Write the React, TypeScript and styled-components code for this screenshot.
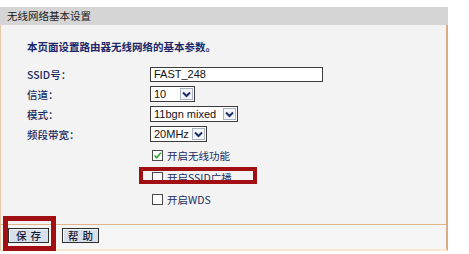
import React from "react";
import styled, { createGlobalStyle } from "styled-components";

const Global = createGlobalStyle`
  html, body { margin: 0; padding: 0; background: #ffffff; }
  body { font-family: "Noto Sans CJK SC", "Liberation Sans", sans-serif; }
`;

const Panel = styled.div`
  width: 448px;
  padding-top: 7px;
`;

const Header = styled.div`
  height: 18px;
  background: #d5d5d5;
  display: flex;
  align-items: center;
  padding-left: 7px;
  font-size: 10.5px;
  color: #1a1a1a;
  line-height: 18px;
`;

const Body = styled.div`
  background: #f3f3f3;
  border-left: 1px solid #e6c7a6;
  border-right: 2px solid #d7ad87;
  border-bottom: 1px solid #e2b48c;
  padding: 12px 0 14px 26px;
`;

const Intro = styled.div`
  font-size: 10.5px;
  line-height: 20px;
  height: 20px;
  font-weight: bold;
  color: #1b2768;
  margin-bottom: 7px;
`;

const Form = styled.div`
  display: grid;
  grid-template-columns: 123px 1fr;
  grid-auto-rows: 20px;
  align-items: center;
`;

const Label = styled.div`
  font-size: 10.5px;
  color: #202c63;
  font-weight: 500;
`;

const TextInput = styled.div`
  box-sizing: border-box;
  width: 173px;
  height: 15px;
  border: 1px solid #3c3c3c;
  background: #fff;
  font-family: "Liberation Sans", Arial, sans-serif;
  font-size: 11px;
  line-height: 13px;
  padding-left: 3px;
  color: #111;
`;

const Select = styled.div<{ $w: number }>`
  box-sizing: border-box;
  width: ${(p) => p.$w}px;
  height: 16px;
  border: 1px solid #3c3c3c;
  background: #fff;
  display: flex;
  align-items: center;
  justify-content: space-between;
  padding: 0 1px 0 3px;
  font-family: "Liberation Sans", Arial, sans-serif;
  font-size: 11px;
  color: #111;
`;

const Arrow = styled.span`
  box-sizing: border-box;
  width: 13px;
  height: 12px;
  border: 1px solid #a9b3c4;
  background: #f4f6fa;
  display: flex;
  align-items: center;
  justify-content: center;
`;

const Checks = styled.div`
  display: grid;
  grid-template-columns: 125px 1fr;
  grid-auto-rows: 22px;
  align-items: center;
`;

const CheckRow = styled.div<{ $marked?: boolean }>`
  grid-column: 2;
  position: relative;
  display: flex;
  align-items: center;
  gap: 4px;
  font-size: 10.5px;
  color: #202c63;
  height: 22px;
  ${(p) =>
    p.$marked
      ? `&::before {
    content: "";
    position: absolute;
    left: -13px;
    top: 1px;
    width: 110px;
    height: 9px;
    border: 4px solid #a20f12;
  }`
      : ""}
`;

const Box = styled.span`
  box-sizing: border-box;
  width: 11px;
  height: 11px;
  border: 1px solid #4a4a4a;
  background: #fff;
  display: inline-flex;
  align-items: center;
  justify-content: center;
`;

const Footer = styled.div`
  box-sizing: border-box;
  height: 26px;
  background: #f6f5f6;
  border-left: 1px solid #e6c7a6;
  border-right: 2px solid #d7ad87;
  border-bottom: 2px solid #fbe6cf;
  display: flex;
  align-items: flex-start;
  gap: 13px;
  padding: 3px 0 0 7px;
`;

const Button = styled.span<{ $marked?: boolean }>`
  position: relative;
  box-sizing: border-box;
  height: 15px;
  width: ${(p) => (p.$marked ? 41 : 37)}px;
  border: 1px solid #2e2e2e;
  background: #d6dfea;
  box-shadow: inset 1px 1px 0 #f4f7fb;
  font-size: 10.5px;
  font-weight: 500;
  color: #151c3a;
  letter-spacing: 4px;
  display: flex;
  align-items: center;
  justify-content: center;
  padding-left: 4px;
  ${(p) =>
    p.$marked
      ? `&::before {
    content: "";
    position: absolute;
    left: -6px;
    top: -13px;
    width: 43px;
    height: 25px;
    border: 5px solid #a20f12;
  }`
      : ""}
`;

const Chevron = () => (
  <svg width="9" height="7" viewBox="0 0 9 7">
    <path d="M1 1.5 L4.5 5 L8 1.5" fill="none" stroke="#1e2f6a" strokeWidth="2" />
  </svg>
);

const Tick = () => (
  <svg width="9" height="9" viewBox="0 0 9 9">
    <path d="M1.5 4.5 L3.7 6.8 L7.8 1.8" fill="none" stroke="#2fa52f" strokeWidth="1.6" />
  </svg>
);

export default function App() {
  return (
    <>
      <Global />
      <Panel>
        <Header>无线网络基本设置</Header>
        <Body>
          <Intro>本页面设置路由器无线网络的基本参数。</Intro>
          <Form>
            <Label>SSID号：</Label>
            <TextInput>FAST_248</TextInput>
            <Label>信道：</Label>
            <Select $w={45}>
              10
              <Arrow>
                <Chevron />
              </Arrow>
            </Select>
            <Label>模式：</Label>
            <Select $w={88}>
              11bgn mixed
              <Arrow>
                <Chevron />
              </Arrow>
            </Select>
            <Label>频段带宽：</Label>
            <Select $w={57}>
              20MHz
              <Arrow>
                <Chevron />
              </Arrow>
            </Select>
          </Form>
          <Checks>
            <CheckRow>
              <Box>
                <Tick />
              </Box>
              开启无线功能
            </CheckRow>
            <CheckRow $marked>
              <Box />
              开启SSID广播
            </CheckRow>
            <CheckRow>
              <Box />
              开启WDS
            </CheckRow>
          </Checks>
        </Body>
        <Footer>
          <Button $marked>保存</Button>
          <Button>帮助</Button>
        </Footer>
      </Panel>
    </>
  );
}
